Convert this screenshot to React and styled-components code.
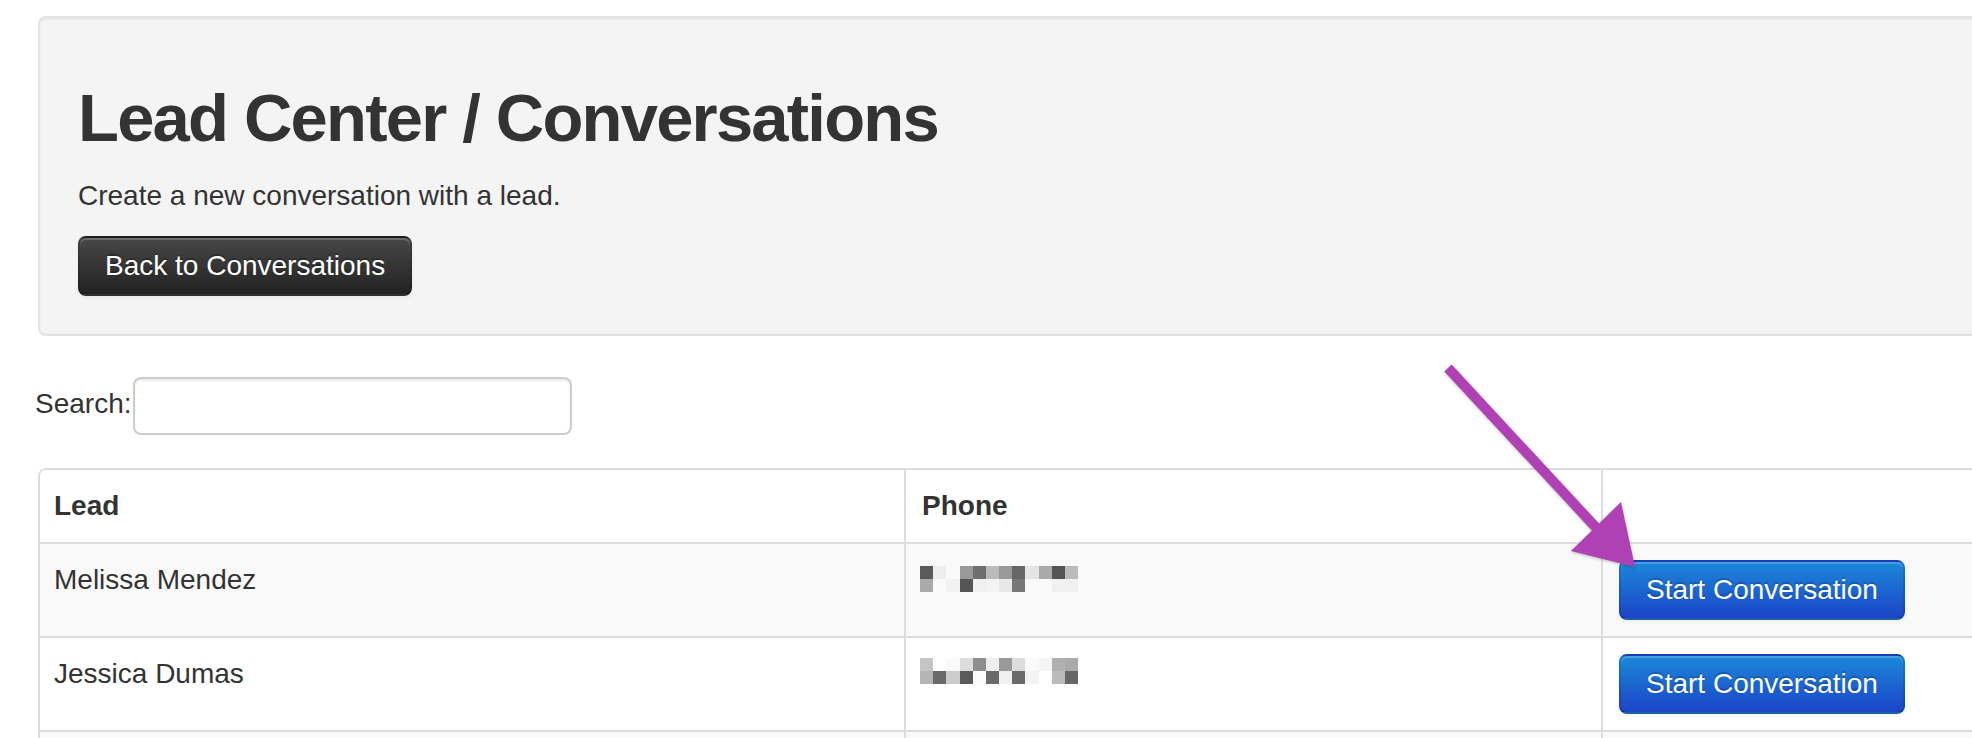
import React from "react";
import styled, { createGlobalStyle, css } from "styled-components";

const GlobalStyle = createGlobalStyle`
  html, body {
    margin: 0;
    padding: 0;
    background: #ffffff;
    overflow: hidden;
  }
  body {
    font-family: "Liberation Sans", Arial, Helvetica, sans-serif;
    color: #333333;
    font-size: 28px;
    line-height: 40px;
  }
  * { box-sizing: border-box; }
`;

const Page = styled.div`
  position: relative;
  width: 2100px;
  padding: 16px 0 0 38px;
`;

const Well = styled.section`
  width: 2040px;
  padding: 38px;
  margin-bottom: 40px;
  background: #f4f4f4;
  border: 2px solid #e3e3e3;
  border-radius: 8px;
  box-shadow: inset 0 2px 2px rgba(0, 0, 0, 0.05);
`;

const Title = styled.h1`
  margin: 22px 0 18px;
  font-size: 67px;
  line-height: 80px;
  font-weight: 700;
  letter-spacing: -1.8px;
  color: #333333;
`;

const Lead = styled.p`
  margin: 0 0 20px;
  font-size: 28px;
  line-height: 40px;
`;

const variants = {
  inverse: css`
    background: linear-gradient(to bottom, #474747, #222222);
    border-color: rgba(0, 0, 0, 0.1) rgba(0, 0, 0, 0.1) rgba(0, 0, 0, 0.3);
    text-shadow: 0 -2px 0 rgba(0, 0, 0, 0.25);
  `,
  primary: css`
    background: linear-gradient(to bottom, #1b88d8, #1c44c8);
    border-color: rgba(0, 0, 0, 0.1) rgba(0, 0, 0, 0.1) rgba(0, 0, 0, 0.25);
    text-shadow: 0 -2px 0 rgba(0, 0, 0, 0.2);
  `,
};

const Button = styled.button`
  display: inline-block;
  margin: 0;
  padding: 8px 25px;
  font-family: inherit;
  font-size: 28px;
  line-height: 40px;
  color: #ffffff;
  border: 2px solid;
  border-radius: 8px;
  box-shadow: inset 0 2px 0 rgba(255, 255, 255, 0.2), 0 2px 4px rgba(0, 0, 0, 0.05);
  cursor: pointer;
  ${(p) => variants[p.$variant]}
`;

const SearchRow = styled.div`
  display: flex;
  align-items: center;
  height: 60px;
  margin-bottom: 32px;
`;

const SearchLabel = styled.label`
  font-size: 28px;
  line-height: 34px;
  padding-bottom: 5px;
  margin-left: -3px;
  margin-right: 1px;
`;

const SearchInput = styled.input`
  width: 439px;
  height: 58px;
  padding: 8px 12px;
  font-family: inherit;
  font-size: 28px;
  background: #ffffff;
  border: 2px solid #cccccc;
  border-radius: 8px;
  box-shadow: inset 0 2px 2px rgba(0, 0, 0, 0.075);
  outline: none;
`;

const Table = styled.div`
  width: 2040px;
  border: 2px solid #dddddd;
  border-radius: 8px 8px 0 0;
  overflow: hidden;
`;

const Row = styled.div`
  display: grid;
  grid-template-columns: 864px 697px 1fr;
  background: ${(p) => (p.$striped ? "#f9f9f9" : "#ffffff")};
  & + & {
    border-top: 2px solid #dddddd;
  }
`;

const Cell = styled.div`
  padding: 16px;
  min-height: 72px;
  line-height: 40px;
  font-size: 28px;
  font-weight: ${(p) => (p.$head ? 700 : 400)};
  &:first-child {
    padding-left: 14px;
  }
  & + & {
    border-left: 2px solid #dddddd;
  }
`;

const PhoneBlur = styled.svg`
  display: block;
  margin: ${(p) => p.$offset}px 0 0 -2px;
`;

const ArrowOverlay = styled.svg`
  position: absolute;
  left: 1430px;
  top: 350px;
  pointer-events: none;
  filter: drop-shadow(0 1px 1.5px rgba(0, 0, 0, 0.25));
`;

const phones = [
  [
    ["#5a5a5a", "#eeeeee", "#fafafa", "#999999", "#6e6e6e", "#bbbbbb", "#999999", "#666666", "#e5e5e5", "#aaaaaa", "#555555", "#bbbbbb"],
    ["#aaaaaa", "#fafafa", "#f2f2f2", "#555555", "#f0f0f0", "#f3f3f3", "#e8e8e8", "#777777", "#fafafa", "#fafafa", "#f0f0f0", "#f0f0f0"],
  ],
  [
    ["#c5c5c5", "#ffffff", "#fafafa", "#dddddd", "#8e8e8e", "#eeeeee", "#999999", "#dddddd", "#fafafa", "#f5f5f5", "#b0b0b0", "#aaaaaa"],
    ["#b5b5b5", "#6a6a6a", "#cccccc", "#5a5a5a", "#fcfcfc", "#6a6a6a", "#f0f0f0", "#6a6a6a", "#f3f3f3", "#ffffff", "#bbbbbb", "#666666"],
  ],
];

function Phone({ grid, offset }) {
  const bw = 158 / 12;
  return (
    <PhoneBlur $offset={offset} width="158" height="26" viewBox="0 0 158 26" shapeRendering="crispEdges">
      {grid.map((row, r) =>
        row.map((c, i) => (
          <rect key={`${r}-${i}`} x={i * bw} y={r * 13} width={bw + 0.5} height="13" fill={c} />
        ))
      )}
    </PhoneBlur>
  );
}

const leads = [
  { name: "Melissa Mendez", phone: phones[0], offset: 6 },
  { name: "Jessica Dumas", phone: phones[1], offset: 4 },
];

export default function App() {
  return (
    <>
      <GlobalStyle />
      <Page>
        <Well>
          <Title>Lead Center / Conversations</Title>
          <Lead>Create a new conversation with a lead.</Lead>
          <Button $variant="inverse">Back to Conversations</Button>
        </Well>

        <SearchRow>
          <SearchLabel htmlFor="search">Search:</SearchLabel>
          <SearchInput id="search" type="text" />
        </SearchRow>

        <Table>
          <Row>
            <Cell $head>Lead</Cell>
            <Cell $head>Phone</Cell>
            <Cell $head />
          </Row>
          {leads.map((l, i) => (
            <Row key={l.name} $striped={i % 2 === 0}>
              <Cell>{l.name}</Cell>
              <Cell>
                <Phone grid={l.phone} offset={l.offset} />
              </Cell>
              <Cell>
                <Button $variant="primary">Start Conversation</Button>
              </Cell>
            </Row>
          ))}
          <Row $striped>
            <Cell />
            <Cell />
            <Cell />
          </Row>
        </Table>

        <ArrowOverlay width="230" height="240" viewBox="0 0 230 240">
          <line x1="18" y1="18" x2="172" y2="184" stroke="#b041b5" strokeWidth="10" strokeLinecap="butt" />
          <polygon points="205,217 141,201 191,152" fill="#b041b5" />
        </ArrowOverlay>
      </Page>
    </>
  );
}
